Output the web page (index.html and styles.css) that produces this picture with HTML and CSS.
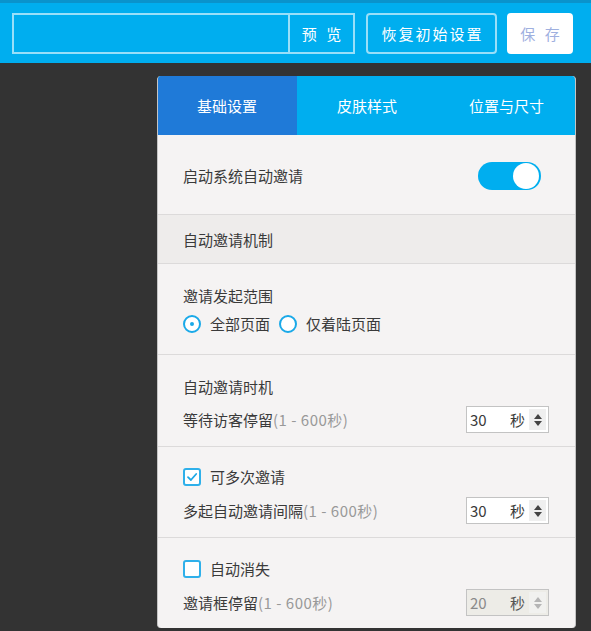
FILE: index.html
```html
<!DOCTYPE html>
<html lang="zh-CN">
<head>
<meta charset="utf-8">
<title>自动邀请设置</title>
<link rel="stylesheet" href="styles.css">
</head>
<body>
<header class="topbar">
  <div class="url-group">
    <div class="url-input"></div>
    <button class="btn-preview">预 览</button>
  </div>
  <button class="btn-outline">恢复初始设置</button>
  <button class="btn-save">保 存</button>
</header>

<main class="panel">
  <nav class="tabs">
    <div class="tab active">基础设置</div>
    <div class="tab">皮肤样式</div>
    <div class="tab">位置与尺寸</div>
  </nav>

  <section class="row row-switch">
    <span class="label">启动系统自动邀请</span>
    <span class="switch"><span class="knob"></span></span>
  </section>

  <div class="section-head">自动邀请机制</div>

  <section class="row row-block row-range">
    <div class="line">邀请发起范围</div>
    <div class="line radios">
      <span class="radio checked"></span><span class="opt">全部页面</span>
      <span class="radio"></span><span class="opt">仅着陆页面</span>
    </div>
  </section>

  <section class="row row-block row-timing">
    <div class="line">自动邀请时机</div>
    <div class="line field">
      <span>等待访客停留<span class="hint">(1 - 600秒)</span></span>
      <div class="num"><span class="val">30</span><span class="unit">秒</span><span class="spin"><i class="up"></i><i class="down"></i></span></div>
    </div>
  </section>

  <section class="row row-block row-multi">
    <div class="line check-line"><span class="check checked"><svg viewBox="0 0 12 12" width="12" height="12"><path d="M2 6.2 L4.9 9 L10.2 3" fill="none" stroke="#1ea8e6" stroke-width="1.8" stroke-linecap="round" stroke-linejoin="round"/></svg></span><span class="opt">可多次邀请</span></div>
    <div class="line field">
      <span>多起自动邀请间隔<span class="hint">(1 - 600秒)</span></span>
      <div class="num"><span class="val">30</span><span class="unit">秒</span><span class="spin"><i class="up"></i><i class="down"></i></span></div>
    </div>
  </section>

  <section class="row row-block row-hide">
    <div class="line check-line"><span class="check"></span><span class="opt">自动消失</span></div>
    <div class="line field">
      <span>邀请框停留<span class="hint">(1 - 600秒)</span></span>
      <div class="num disabled"><span class="val">20</span><span class="unit">秒</span><span class="spin"><i class="up"></i><i class="down"></i></span></div>
    </div>
  </section>
</main>
</body>
</html>
```

FILE: styles.css
```css
* { box-sizing: border-box; }
html, body { margin: 0; padding: 0; }
body {
  background: #333333;
  font-family: "Noto Sans CJK SC", "Noto Sans", sans-serif;
  color: #3a3a3a;
  width: 591px;
  height: 631px;
  overflow: hidden;
}
button { font-family: inherit; cursor: pointer; }

.topbar {
  height: 63px;
  background: #00aeef;
  border-top: 3px solid #0a93cc;
  display: flex;
  align-items: flex-start;
  padding: 10px 0 0 12px;
  gap: 11px;
}
.url-group {
  display: flex;
  width: 343px;
  height: 41px;
  border: 2px solid rgba(255,255,255,0.6);
}
.url-input { flex: 1; }
.btn-preview {
  width: 65px;
  background: transparent;
  border: none;
  border-left: 2px solid rgba(255,255,255,0.6);
  color: #fff;
  font-size: 15px;
  letter-spacing: 3px;
  padding: 0 0 0 3px;
}
.btn-outline {
  width: 131px;
  height: 41px;
  background: transparent;
  border: 2px solid rgba(255,255,255,0.6);
  border-radius: 4px;
  color: #fff;
  font-size: 15px;
  letter-spacing: 2px;
  padding: 0 0 0 2px;
}
.btn-save {
  width: 66px;
  height: 41px;
  background: #fff;
  border: none;
  border-radius: 4px;
  color: #9fb0df;
  font-size: 15px;
  letter-spacing: 3px;
  padding: 0 0 0 3px;
  margin-left: -1px;
}

.panel {
  margin: 13px 0 0 157px;
  width: 419px;
  height: 552px;
  background: #f5f3f3;
  border-radius: 4px;
  overflow: hidden;
  border-left: 1px solid #c4c4c4;
  border-right: 1px solid #c4c4c4;
}
.tabs {
  display: grid;
  grid-template-columns: 140px 140px 1fr;
  height: 59px;
  background: #00aeef;
  margin-left: -1px;
  margin-right: -1px;
}
.tab {
  display: flex;
  align-items: center;
  justify-content: center;
  color: #fff;
  font-size: 15px;
}
.tab.active { background: #1f7ad8; }

.row {
  border-bottom: 1px solid #dcdada;
  padding-left: 25px;
  font-size: 15px;
}
.row-switch {
  height: 80px;
  display: flex;
  align-items: center;
  justify-content: space-between;
  padding-right: 34px;
  padding-top: 2px;
}
.switch {
  width: 63px;
  height: 28px;
  border-radius: 14px;
  background: #00aeef;
  position: relative;
}
.knob {
  position: absolute;
  right: 2px;
  top: 1px;
  width: 26px;
  height: 26px;
  border-radius: 50%;
  background: #fff;
}

.section-head {
  height: 49px;
  background: #eeeceb;
  border-bottom: 1px solid #dcdada;
  padding-left: 25px;
  display: flex;
  align-items: center;
  font-size: 15px;
}

.row-block {
  padding-right: 26px;
  display: flex;
  flex-direction: column;
}
.row-range { height: 91px; padding-top: 22px; gap: 8px; }
.row-timing { height: 92px; padding-top: 22px; gap: 9px; }
.row-multi { height: 91px; padding-top: 20px; gap: 10px; }
.row-hide { height: 90px; padding-top: 21px; gap: 10px; border-bottom: none; }

.line {
  height: 20px;
  line-height: 20px;
  display: flex;
  align-items: center;
}
.radio {
  width: 18px;
  height: 18px;
  border-radius: 50%;
  border: 2px solid #1aa9e8;
  background: #fff;
  position: relative;
  margin-right: 9px;
}
.radio.checked::after {
  content: "";
  position: absolute;
  left: 5px; top: 5px;
  width: 4px; height: 4px;
  border-radius: 50%;
  background: #1aa9e8;
}
.opt { margin-right: 9px; }

.field {
  height: 27px;
  justify-content: space-between;
}
.hint { color: #999; letter-spacing: 0.5px; }

.check {
  width: 18px;
  height: 18px;
  border: 2px solid #2fb0ea;
  border-radius: 3px;
  background: #fff;
  margin-right: 9px;
  display: flex;
  align-items: center;
  justify-content: center;
}

.num {
  width: 83px;
  height: 27px;
  border: 1px solid #c3c3c3;
  background: #fff;
  display: flex;
  align-items: center;
  padding: 2px;
  font-size: 15px;
}
.num .val { width: 42px; padding-left: 1px; }
.num .unit { width: 20px; }
.num .spin {
  width: 17px;
  height: 100%;
  margin-left: auto;
  background: #efefef;
  display: flex;
  flex-direction: column;
  align-items: center;
  justify-content: center;
  gap: 2px;
}
.spin i {
  display: block;
  width: 0; height: 0;
  border-left: 4px solid transparent;
  border-right: 4px solid transparent;
}
.spin .up { border-bottom: 5px solid #444; }
.spin .down { border-top: 5px solid #444; }
.num.disabled { background: #edece7; color: #8a8a8a; }
.num.disabled .unit { color: #555; }
.num.disabled .spin { background: #f1f1ef; }
.num.disabled .spin .up { border-bottom-color: #b5b5b5; }
.num.disabled .spin .down { border-top-color: #b5b5b5; }
```
